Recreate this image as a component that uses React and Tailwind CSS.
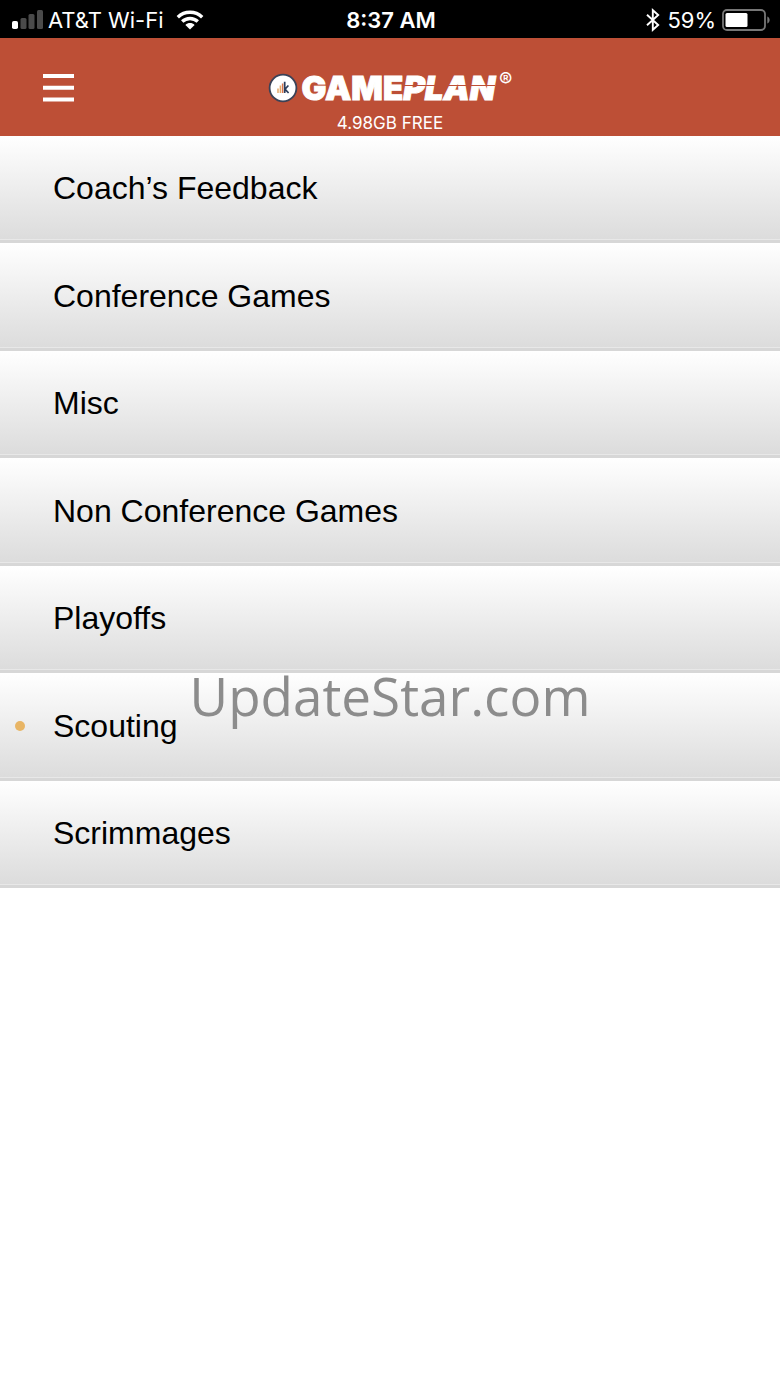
const folders = [
  { name: 'Coach’s Feedback' },
  { name: 'Conference Games' },
  { name: 'Misc' },
  { name: 'Non Conference Games' },
  { name: 'Playoffs' },
  { name: 'Scouting', unread: true },
  { name: 'Scrimmages' },
];

const SignalIcon = () => (
  <svg className="w-8 h-5" viewBox="0 0 32 20" aria-hidden="true">
    <rect x="0" y="11" width="6" height="8" rx="1.8" fill="#fff" />
    <rect x="8.5" y="8" width="6" height="11" rx="1.5" fill="#4a4a4a" />
    <rect x="16.5" y="4" width="6" height="15" rx="1.5" fill="#4a4a4a" />
    <rect x="25" y="0" width="6" height="19" rx="1.5" fill="#4a4a4a" />
  </svg>
);

const WifiIcon = () => (
  <svg className="w-7 h-5" viewBox="0 0 28 20" aria-hidden="true">
    <g fill="none" stroke="#fff" strokeWidth="3.4">
      <path d="M1.8 7.2C8.6 .6 19.4 .6 26.2 7.2" />
      <path d="M6.2 11.6C10.6 7.4 17.4 7.4 21.8 11.6" />
    </g>
    <path d="M9.4 14.9C12 12.5 16 12.5 18.6 14.9L14 19.4Z" fill="#fff" />
  </svg>
);

const BluetoothIcon = () => (
  <svg className="w-4 h-6" viewBox="0 0 16 24" fill="none" stroke="#fff" strokeWidth="1.9" aria-hidden="true">
    <path d="M2 6.8L13.2 17L7.8 21.8V2.2L13.2 7L2 17.2" />
  </svg>
);

const BatteryIcon = () => (
  <svg className="w-12 h-[22px]" viewBox="0 0 48 22" aria-hidden="true">
    <rect x="1" y="1" width="42" height="20" rx="4" fill="none" stroke="#777" strokeWidth="1.8" />
    <rect x="3.5" y="4" width="22" height="14" rx="1.5" fill="#fff" />
    <path d="M45.3 7.5C48.4 8.6 48.4 13.4 45.3 14.5Z" fill="#777" />
  </svg>
);

const LogoMark = () => (
  <svg className="w-[30px] h-[30px]" viewBox="0 0 30 30" aria-hidden="true">
    <circle cx="15" cy="15" r="13.4" fill="#fff" stroke="#3b4257" strokeWidth="1.8" />
    <path d="M10 20V15.5M12.4 20V12.5" stroke="#e5a968" strokeWidth="1.5" />
    <path d="M14.6 20V10.5" stroke="#d9764b" strokeWidth="1.5" />
    <path d="M16.7 20V8.8M20.4 12.5L17 16.2L20.6 20" fill="none" stroke="#2c3e5c" strokeWidth="1.7" />
  </svg>
);

const StatusBar = () => (
  <div className="grid grid-cols-[1fr_auto_1fr] items-center h-[38px] pt-0.5 bg-black text-white text-[22px] leading-6 pl-3 pr-[10px]">
    <div className="flex items-center gap-1">
      <SignalIcon />
      <span className="mr-2 whitespace-nowrap">AT&amp;T Wi-Fi</span>
      <WifiIcon />
    </div>
    <span className="font-semibold">8:37 AM</span>
    <div className="flex items-center justify-end gap-1.5">
      <BluetoothIcon />
      <span>59%</span>
      <BatteryIcon />
    </div>
  </div>
);

const Header = () => (
  <header className="grid grid-cols-[1fr_auto_1fr] h-[98px] bg-[#bd4f36] text-white">
    <button type="button" aria-label="Menu" className="justify-self-start self-start ml-[43px] mt-9">
      <svg className="w-8 h-7" viewBox="0 0 32 28" aria-hidden="true">
        <path d="M0 2H31M0 13.7H31M0 25.5H31" stroke="#fff" strokeWidth="4" />
      </svg>
    </button>
    <div className="flex flex-col items-center pt-8">
      <div className="flex items-center gap-1">
        <LogoMark />
        <h1 className="relative flex text-[33px] leading-9 font-black [-webkit-text-stroke:1px_white]">
          <span>GAME</span>
          <span className="italic">PLAN</span>
          {/* stencil cut through the second half */}
          <span className="absolute right-0 top-[15px] w-[92px] h-px bg-[#bd4f36]" />
        </h1>
        <span className="self-start text-xl leading-5">®</span>
      </div>
      <p className="text-[17px] leading-5 mt-[7px]">4.98GB FREE</p>
    </div>
  </header>
);

const FolderRow = ({ folder }) => (
  <li className="h-[107px] even:h-[108px] border-b-3 border-[#d7d7d7]">
    <a
      href="#"
      className="flex items-center h-full pt-px border-b border-[#e8e8e8] bg-linear-to-b from-white to-[#dcdcdc] text-black text-[32px] leading-10"
    >
      <span className="w-[53px] shrink-0 pl-[15px]">
        {folder.unread && <span className="block size-[10px] rounded-full bg-[#e8b565]" />}
      </span>
      {folder.name}
    </a>
  </li>
);

const App = () => (
  <div className="relative min-h-screen bg-white font-['Inter',sans-serif]">
    <StatusBar />
    <Header />
    <nav className="font-['Liberation_Sans',sans-serif]">
      <ul>
        {folders.map((folder) => (
          <FolderRow key={folder.name} folder={folder} />
        ))}
      </ul>
    </nav>
    {/* Watermark */}
    <div className="absolute inset-x-0 top-[660px] text-center font-['Open_Sans',sans-serif] text-[53px] leading-[72px] text-[#8c8c8c] pointer-events-none">
      UpdateStar.com
    </div>
  </div>
);

export default App;
